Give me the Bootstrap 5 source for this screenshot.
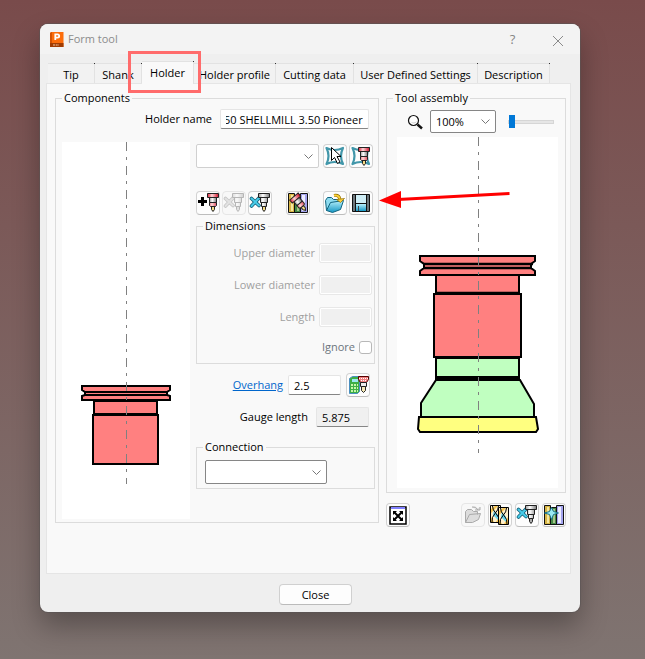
<!DOCTYPE html>
<html lang="en">
<head>
<meta charset="utf-8">
<meta name="viewport" content="width=device-width, initial-scale=1">
<title>Form tool</title>
<link rel="stylesheet" href="https://cdn.jsdelivr.net/npm/bootstrap@5.3.0/dist/css/bootstrap.min.css">
<style>
body { min-height: 100vh; background: linear-gradient(#794b4b, #7f7471); font: 11px/16px "Open Sans", "Noto Sans", sans-serif; color: #000; padding: 24px 65px 24px 40px; }
.tool-window { background: #efefef; border-radius: 8px; box-shadow: 0 0 0 1px rgba(90,85,85,.6), 0 14px 28px rgba(0,0,0,.3); position: relative; }
.title-strip { height: 30px; background: #f3f3f3; border-radius: 8px 8px 0 0; color: #8c8c8c; padding-left: 9px; }
.win-btn { border: 0; background: none; padding: 0; width: 45px; height: 28px; color: #858585; font-size: 13px; }
.window-body { padding: 7px 9px 0 6px; }
.tab-strip { height: 22px; padding-left: 2px; position: relative; }
.tab-strip button { height: 20px; border: 1px solid #e2e2e2; border-left: 0; border-bottom: 0; background: #f2f2f2; padding: 2px 0 0; white-space: nowrap; color: #000; position: relative; }
.tab-strip button::after { content: ""; position: absolute; right: -1px; top: -1px; width: 1px; height: 1px; background: #333; }
.tab-strip button.active { height: 23px; background: #f9f9f9; margin-bottom: -1px; padding-bottom: 3px; }
.tab-s { width: 47px; } .tab-m { width: 52px; } .tab-l { width: 78px; } .tab-n { width: 72px; } .tab-p { width: 82px; } .tab-x { width: 124px; }
.tab-pane-box { background: #f9f9f9; border: 1px solid #e5e5e5; padding: 6px 4px 46px 8px; display: grid; grid-template-columns: 324fr 180fr; gap: 7px; align-items: start; }
fieldset { border: 1px solid #dcdcdc; padding: 0 3px 3px 6px; }
fieldset legend { float: none; width: auto; font-size: inherit; line-height: 16px; margin: 0; padding: 0 2px; }
.form-control, .form-select { font-size: 11px; line-height: 16px; color: #000; border-radius: 2px; min-height: 0; }
.form-control { height: 20px; padding: 0 5px; border: 1px solid #e5e5e5; border-bottom-color: #868686; }
.form-control:disabled { border-color: #e8e8e8; background: #f0f0f0; box-shadow: inset 0 0 0 1px #fff; }
.form-control[readonly] { background: #f0f0f0; }
.form-select { height: 24px; padding: 0 22px 0 6px; border: 1px solid #868686; background-size: 9px; background-position: right 5px center; background-image: url("data:image/svg+xml,%3csvg xmlns='http://www.w3.org/2000/svg' viewBox='0 0 9 9'%3e%3cpath fill='none' stroke='%23777' d='M.5 2.5l4 4 4-4'/%3e%3c/svg%3e"); }
.form-select.pale { border-color: #d0d0d0; }
.num-field { width: 53px; flex: none; }
.name-field { width: 149px; margin-right: 6px; }
.name-row { padding-top: 3px; margin-bottom: 13px; }
.dim { color: #a0a0a0; }
.parts { gap: 6px; }
.controls-col { width: 179px; flex: none; padding-top: 2px; }
.profile-view { background: #fff; min-width: 0; }
.profile-view svg { display: block; width: 100%; height: auto; }
.tool-btn { width: 24px; height: 24px; flex: none; padding: 0; border: 1px solid #d2d2d2; border-bottom-color: #bdbdbd; border-radius: 4px; background: #fdfdfd; display: block; }
.tool-btn:disabled { border-color: #e6e6e6; background: #f8f8f8; }
.tool-btn svg { display: block; width: 22px; height: 22px; }
.row-a, .row-b { padding-right: 2px; }
.row-a { margin-bottom: 23px; } .row-b { margin-bottom: 3px; }
.pair { margin-left: 2px; }
.dims-box { padding: 0 2px 8px 6px; }
.dims-rows { display: grid; gap: 12px; padding-top: 9px; }
.tick { width: 13px; height: 13px; margin: 0; border: 1px solid #b8b8b8; border-radius: 3px !important; }
.overhang-row { margin-top: 9px; padding-right: 5px; gap: 5px; }
.gauge-row { margin-top: 10px; padding-right: 6px; }
.conn-box { margin-top: 12px; padding: 0 3px 4px 6px; }
.conn-box .form-select { width: 122px; margin: 5px 0 0 2px; }
a.over { color: #0066cc; }
.asm-box { padding: 0 3px 4px 6px; }
.zoom-row { padding: 4px 0 4px 14px; }
.zoom-row .form-select { width: 66px; margin: 0 12px 0 7px; height: 23px; padding-left: 5px; }
.zoom-range { width: 46px; height: 16px; padding: 0; background: none; appearance: none; }
.zoom-range::-webkit-slider-runnable-track { height: 4px; background: #e6e6e6; border: 1px solid #d6d6d6; border-radius: 0; }
.zoom-range::-webkit-slider-thumb { -webkit-appearance: none; width: 6px; height: 13px; margin-top: -6px; background: #0078d7; border: 0; border-radius: 0; }
.asm-view { margin: 0 4px; }
.lower-tools { margin-top: 10px; gap: 3px; }
.foot { padding: 10px 0 7px 11px; }
.close-btn { width: 73px; height: 21px; padding: 0; border: 1px solid #d0d0d0; border-bottom-color: #bbb; border-radius: 4px; background: #fdfdfd; color: #000; }
.mark-box { position: absolute; left: 82px; top: -10px; width: 73px; height: 42px; border: 3px solid #ff6b6b; pointer-events: none; z-index: 2; }
.mark-arrow { position: absolute; left: 338px; top: 164px; pointer-events: none; }
</style>
<script src="https://cdn.jsdelivr.net/npm/bootstrap@5.3.0/dist/js/bootstrap.bundle.min.js"></script>
</head>
<body>
<svg width="0" height="0" class="position-absolute" aria-hidden="true">
  <defs>
    <linearGradient id="metal"><stop offset="0" stop-color="#999"/><stop offset=".4" stop-color="#fff"/><stop offset="1" stop-color="#777"/></linearGradient>
    <linearGradient id="redmetal"><stop offset="0" stop-color="#d8203a"/><stop offset=".4" stop-color="#ffd8d8"/><stop offset="1" stop-color="#d0102a"/></linearGradient>
    <linearGradient id="aqua" x2="0" y2="1"><stop offset="0" stop-color="#b8f0fc"/><stop offset="1" stop-color="#1597c4"/></linearGradient>
    <g id="holder-red" stroke="#222" stroke-width="1">
      <path fill="#f5dc86" d="M4.500 13.500h3v3l-1.500 2-1.500-2z"/>
      <path fill="url(#metal)" d="M2.500 4.500h7v5h-7z"/>
      <path fill="url(#redmetal)" d="M.5 .5h11v4H.5zM2.500 9.500h7v3l-1 1h-5l-1-1z"/>
    </g>
    <g id="holder-steel" stroke="#222" stroke-width="1">
      <path fill="url(#metal)" d="M.5 .5h11v4H.5zM2.500 4.500h7v5h-7zM3.500 9.500h5v4h-5z"/>
    </g>
    <path id="tip-yellow" fill="#f5dc86" stroke="#222" d="M4.500 13.500h3v3l-1.500 2-1.500-2z"/>
    <path id="tip-gray" fill="#aaa" stroke="#222" d="M4.500 13.500h3v3l-1.500 2-1.500-2z"/>
    <g id="cross" fill="none" stroke-linecap="round"><path stroke="#146079" stroke-width="3.600" d="M1.500 1.500l7.500 7M9 1L1.500 9"/><path stroke="#48cbe8" stroke-width="2" d="M1.500 1.500l7.500 7M9 1L1.500 9"/></g>
    <path id="star" fill="none" stroke="#4297aa" stroke-width="2.200" stroke-linejoin="round" d="M2.500 3q8 4 16.500 0-4 8 0 16-8.500-4-16.500 0 4-8 0-16z"/>
    <g id="books"><path fill="#d7b545" d="M2 2h6v18H2z"/><path fill="#f4e6a0" d="M4 3h2v16H4z"/><path fill="#458a45" d="M8 4h6v16H8z"/><path fill="#a7c58a" d="M10 5h2v14h-2z"/><path fill="#a3a3ee" d="M14 2h6v18h-6z"/><path fill="#eeeeff" d="M15 3h3v16h-3z"/><path fill="none" stroke="#111" d="M1.500 1.500h6v2h6v-2h7v19h-19zM7.500 3v17M13.500 3v17"/></g>
    <g id="folder"><path fill="#8edcf0" stroke="#10647f" d="M2.500 18.500l-1-10 2-3h4l2 2h5l1 3"/><path fill="url(#aqua)" stroke="#10647f" stroke-linejoin="round" d="M2.500 18.500l4-8 13-2-3 9-8 3z"/><path fill="none" stroke="#8f6c00" stroke-width="3" d="M10 3.500q5-1 6 4"/><path fill="none" stroke="#ffd43a" stroke-width="1.800" d="M10 3.500q5-1 6 4"/><path fill="#ffd43a" stroke="#8f6c00" stroke-width=".7" d="M12.500 7.500l8-1-4 4z"/></g>
    <g id="cutter"><path fill="#fff0cc" stroke="#000" d="M.5 .5h10v17H.500z"/><path fill="#f7c64f" d="M1 12l3 5H1zM10 10l-4 7h4zM1 4l4-3h3L1 8z"/><path fill="#66d5ee" d="M4 5l4 5v5l-5-5z"/><path fill="none" stroke="#000" d="M2.500 1q0 4 3.500 7.500T9 17M8.500 1q0 4-3.500 7.500T2 17"/></g>
  </defs>
</svg>

<main class="tool-window">
  <header class="title-strip d-flex align-items-center">
    <svg width="15" height="17" viewBox="0 0 15 17" class="me-1" aria-hidden="true"><path fill="#fc6d0b" d="M2 1h12.500v15H1V2z"/><path fill="#a13c02" d="M1 12h13.500v4H1z"/><path fill="#d35204" d="M1 2l2-1v11H1z"/><path fill="none" stroke="#fff" stroke-width="1.800" d="M6.300 9V3.400h2.200q1.700 0 1.700 1.600T8.500 6.600H6.300"/><path stroke="#f5c7a6" d="M4 14h6" stroke-dasharray="2 .7"/></svg>
    <span class="flex-grow-1">Form tool</span>
    <button class="win-btn" type="button" aria-label="Help">?</button>
    <button class="win-btn" type="button" aria-label="Close window"><svg width="12" height="12" viewBox="0 0 12 12"><path stroke="#8a8a8a" d="M1 1l10 10M11 1L1 11"/></svg></button>
  </header>

  <div class="window-body">
    <div class="tab-strip d-flex align-items-end" role="tablist">
      <button class="tab-s" role="tab" type="button">Tip</button>
      <button class="tab-s" role="tab" type="button">Shank</button>
      <button class="tab-m active" role="tab" type="button" aria-selected="true">Holder</button>
      <button class="tab-p" role="tab" type="button">Holder profile</button>
      <button class="tab-l" role="tab" type="button">Cutting data</button>
      <button class="tab-x" role="tab" type="button">User Defined Settings</button>
      <button class="tab-n" role="tab" type="button">Description</button>
      <span class="mark-box"></span>
    </div>

    <section class="tab-pane-box" role="tabpanel">
      <fieldset>
        <legend>Components</legend>
        <div class="name-row d-flex align-items-center justify-content-end gap-2">
          <label for="holderName">Holder name</label>
          <input id="holderName" class="form-control name-field" value="50 SHELLMILL 3.50 Pioneer">
        </div>
        <div class="parts d-flex align-items-start">
          <div class="profile-view flex-fill">
            <svg viewBox="62 142 128 377" role="img" aria-label="Holder profile">
              <g fill="#ff8080" stroke="#000" stroke-width="2">
                <path d="M94 401h63v14H94zM93 415h65v49H93z"/>
                <path d="M82 386h88v4l-3 2v3l3 1v4H82v-4l3-1v-3l-3-2z"/>
                <path fill="none" d="M84 392h84M85 395h82M94 414h63"/>
              </g>
              <path stroke="#808080" stroke-dasharray="9 6 3 6" d="M126.500 142v342"/>
            </svg>
          </div>
          <div class="controls-col">
            <div class="row-a d-flex">
              <select class="form-select pale flex-fill me-1" aria-label="Component"><option></option></select>
              <button class="tool-btn" type="button" aria-label="Pick component"><svg viewBox="0 0 22 22"><use href="#star"/><path fill="#fff" stroke="#000" d="M7.500 2.500v13l3-3 3 6 2.500-1.500-3-5.500h4z"/></svg></button>
              <button class="tool-btn pair" type="button" aria-label="Pick holder"><svg viewBox="0 0 22 22"><use href="#star"/><use href="#holder-red" x="8" y="2"/></svg></button>
            </div>
            <div class="row-b d-flex">
              <button class="tool-btn" type="button" aria-label="Add component"><svg viewBox="0 0 22 22"><path stroke="#000" stroke-width="3" d="M1 9.500h9M5.500 5v9"/><use href="#holder-red" x="10" y="1"/></svg></button>
              <button class="tool-btn pair" type="button" aria-label="Remove component" disabled><svg viewBox="0 0 22 22"><g filter="grayscale(1)" opacity=".3"><use href="#cross" x="1" y="5"/><use href="#holder-steel" x="9" y="1"/><use href="#tip-gray" x="9" y="1"/></g></svg></button>
              <button class="tool-btn pair" type="button" aria-label="Clear holder"><svg viewBox="0 0 22 22"><use href="#cross" x="1" y="5"/><use href="#holder-steel" x="9" y="1"/><use href="#tip-yellow" x="9" y="1"/></svg></button>
              <button class="tool-btn mx-auto" type="button" aria-label="Holder library"><svg viewBox="0 0 22 22"><use href="#books"/><g transform="translate(2 8) rotate(-40)"><use href="#holder-red"/></g></svg></button>
              <button class="tool-btn" type="button" aria-label="Open holder"><svg viewBox="0 0 22 22"><use href="#folder"/></svg></button>
              <button class="tool-btn pair" type="button" aria-label="Save holder"><svg viewBox="0 0 22 22"><path fill="#6d777c" stroke="#111" d="M2.500 2.500h17v17h-17z"/><path fill="#cfeef6" d="M6 3h10v8H6z"/><path fill="url(#aqua)" d="M6 12h10v7H6z"/><path stroke="#111" d="M5.500 3v16M16.500 3v16M6 11.500h10" fill="none"/><path fill="#3b464b" d="M8 14h1v5H8z"/></svg></button>
            </div>
            <fieldset class="dims-box">
              <legend>Dimensions</legend>
              <div class="dims-rows">
                <div class="d-flex align-items-center justify-content-end gap-1 dim"><label for="ud">Upper diameter</label><input id="ud" class="form-control num-field" disabled></div>
                <div class="d-flex align-items-center justify-content-end gap-1 dim"><label for="ld">Lower diameter</label><input id="ld" class="form-control num-field" disabled></div>
                <div class="d-flex align-items-center justify-content-end gap-1 dim"><label for="len">Length</label><input id="len" class="form-control num-field" disabled></div>
                <div class="d-flex align-items-center justify-content-end gap-1"><label for="ign" class="text-secondary">Ignore</label><input id="ign" type="checkbox" class="form-check-input tick"></div>
              </div>
            </fieldset>
            <div class="overhang-row d-flex align-items-center justify-content-end">
              <a href="#" class="over" id="ovLabel">Overhang</a>
              <input class="form-control num-field" aria-labelledby="ovLabel" value="2.5">
              <button class="tool-btn" type="button" aria-label="Calculate overhang"><svg viewBox="0 0 22 22"><path fill="#3eae45" stroke="#4b8fc0" d="M2.500 4.500l3-2h7v15l-2 2h-8z"/><path fill="#9ce7f3" d="M5 5h6v3H5z"/><path stroke="#c7f7a9" stroke-width="2" stroke-dasharray="2 1" d="M4 11h7M4 14h7M4 17h7"/><path fill="#f08080" stroke="#500" d="M11.500 2.500h10v3l-2 3h-6l-2-3z"/><path stroke="#fff" stroke-dasharray="1 1" d="M12 4.500h9M14 6.500h5"/><path fill="#eee" stroke="#222" d="M13.500 8.500h6v4h-6z"/><path fill="#f5e9b6" stroke="#222" d="M14.500 12.500h4v4l-2 2-2-2z"/></svg></button>
            </div>
            <div class="gauge-row d-flex align-items-center justify-content-end gap-2">
              <label for="gauge">Gauge length</label>
              <input id="gauge" class="form-control num-field" value="5.875" readonly>
            </div>
            <fieldset class="conn-box">
              <legend>Connection</legend>
              <select class="form-select" aria-label="Connection"><option></option></select>
            </fieldset>
          </div>
        </div>
      </fieldset>

      <div>
        <fieldset class="asm-box">
          <legend>Tool assembly</legend>
          <div class="zoom-row d-flex align-items-center">
            <svg width="16" height="16" viewBox="0 0 16 16" aria-hidden="true"><circle cx="6.500" cy="6.500" r="5" fill="#fff" stroke="#111" stroke-width="1.200"/><path fill="#ccc" d="M3 7q3 3 7 0-3 5-7 0z"/><path stroke="#111" stroke-width="2.400" d="M10.500 10.500l4.500 4"/></svg>
            <select class="form-select" aria-label="Zoom"><option>100%</option></select>
            <input type="range" class="zoom-range" min="0" max="100" value="0" aria-label="Zoom level">
          </div>
          <div class="profile-view asm-view">
            <svg viewBox="397 137 161 351" role="img" aria-label="Tool assembly profile">
              <g stroke="#000" stroke-width="2" fill="#ff8080">
                <path d="M436 275h83v18h-83zM434 294h87v63h-87z"/>
                <path d="M420 256h115v5l-4 3v4l4 3v4H420v-4l4-3v-4l-4-3z"/>
                <path fill="none" stroke-width="2.500" d="M423 264h110M424 268h108M436 293h83"/>
                <path fill="#c0ffc0" d="M436 358h83v20h-83zM436 380h84l14 24v13H421v-14z"/>
                <path stroke-width="5" d="M435 378.500h85"/>
                <path fill="#ffff80" d="M419 417h117l2 12-2 3H420l-2-3z"/>
              </g>
              <path stroke="#808080" stroke-dasharray="9 6 3 6" d="M478.500 137v316"/>
            </svg>
          </div>
        </fieldset>
        <div class="lower-tools d-flex">
          <button class="tool-btn me-auto" type="button" aria-label="Fit view"><svg viewBox="0 0 22 22"><path fill="#fff" stroke="#000" stroke-width="1.500" d="M3 3h16v17H3z"/><path fill="#8080ff" d="M4 3h14v2H4z"/><path stroke="#000" stroke-width="2" d="M7 8l8 8M15 8l-8 8"/><path d="M6 7h4l-4 4zM16 7v4l-4-4zM6 17v-4l4 4zM16 17h-4l4-4z"/></svg></button>
          <button class="tool-btn" type="button" aria-label="Open assembly" disabled><svg viewBox="0 0 22 22"><path fill="#ddd" stroke="#aaa" d="M3.500 18.500v-11l2-2h4l2 2h4v3M3.500 18.500l4-8 11-1-2 6-6 3zM10 3q4-1 6 3M13 6h5v-3"/></svg></button>
          <button class="tool-btn" type="button" aria-label="Compare tools"><svg viewBox="0 0 22 22"><use href="#cutter" x="1" y="1"/><use href="#cutter" x="9" y="3"/></svg></button>
          <button class="tool-btn" type="button" aria-label="Clear assembly"><svg viewBox="0 0 22 22"><use href="#cross" x="1" y="4"/><use href="#holder-steel" x="9" y="1"/><use href="#tip-gray" x="9" y="1"/></svg></button>
          <button class="tool-btn" type="button" aria-label="Add to library"><svg viewBox="0 0 22 22"><use href="#books"/><path fill="#9be9f5" stroke="#17708a" d="M8.500 3.500l2 4 5 1.500-5 1.500-2 5-2-5-5-1.500 5-1.500z"/></svg></button>
        </div>
      </div>
    </section>
  </div>

  <footer class="foot text-center"><button class="close-btn" type="button">Close</button></footer>
  <svg class="mark-arrow" width="134" height="24" viewBox="0 0 134 24" aria-hidden="true"><path stroke="red" stroke-width="3" d="M20 11.500L131.500 5.500"/><path fill="red" d="M1 12.500L23 3v17z"/></svg>
</main>
<script>
const nameField = document.getElementById('holderName');
nameField.scrollLeft = nameField.scrollWidth;
</script>
</body>
</html>
